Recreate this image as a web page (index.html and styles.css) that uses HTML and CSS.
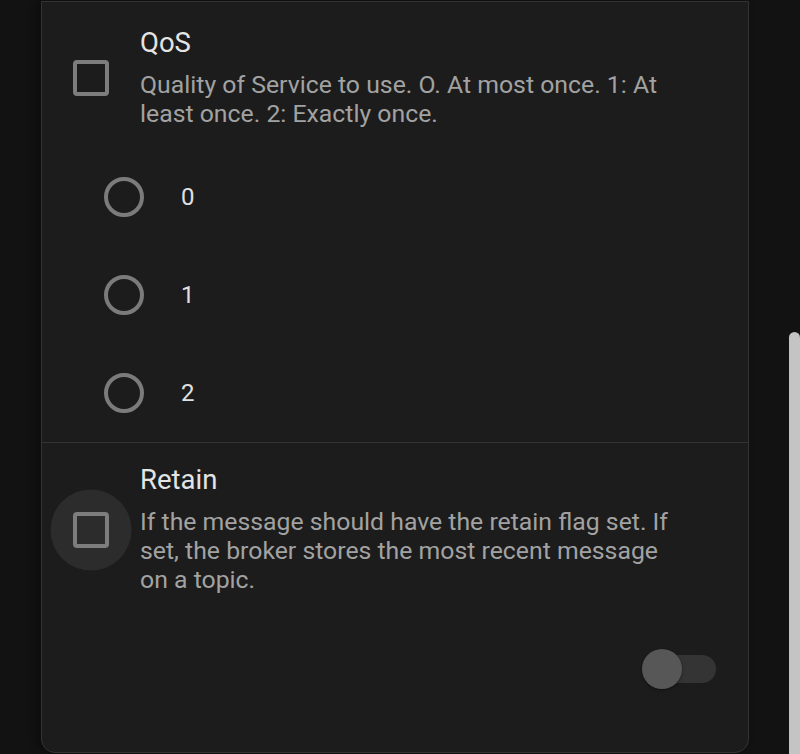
FILE: index.html
```html
<!DOCTYPE html>
<html>
<head>
<meta charset="utf-8">
<link rel="stylesheet" href="styles.css">
</head>
<body>
<div class="page">
  <div class="card">
    <section class="setting qos">
      <div class="control"><span class="checkbox"></span></div>
      <div class="text">
        <div class="title">QoS</div>
        <div class="desc">Quality of Service to use. O. At most once. 1: At least once. 2: Exactly once.</div>
      </div>
    </section>
    <ul class="radios">
      <li class="radio-row"><span class="radio"></span><span class="radio-label">0</span></li>
      <li class="radio-row"><span class="radio"></span><span class="radio-label">1</span></li>
      <li class="radio-row"><span class="radio"></span><span class="radio-label">2</span></li>
    </ul>
    <section class="setting retain">
      <div class="control"><span class="ripple"></span><span class="checkbox"></span></div>
      <div class="text">
        <div class="title">Retain</div>
        <div class="desc">If the message should have the retain flag set. If set, the broker stores the most recent message on a topic.</div>
      </div>
    </section>
    <div class="toggle-row">
      <span class="switch"><span class="track"></span><span class="thumb"></span></span>
    </div>
  </div>
  <div class="scrollbar"><div class="scroll-thumb"></div></div>
</div>
</body>
</html>
```

FILE: styles.css
```css
html, body {
  margin: 0;
  padding: 0;
  background: #121212;
  font-family: Roboto, "Noto Sans", sans-serif;
}
.page {
  display: flex;
  height: 754px;
  overflow: hidden;
  padding-left: 41px;
  box-sizing: border-box;
}
.card {
  width: 708px;
  height: 752px;
  margin-top: 1px;
  box-sizing: border-box;
  background: #1c1c1c;
  border: 1px solid #333333;
  border-radius: 0 0 14px 14px;
  box-shadow: -4px 0 8px rgba(0,0,0,0.35);
  display: flex;
  flex-direction: column;
}
.setting {
  display: grid;
  grid-template-columns: 98px 1fr;
  align-items: center;
}
.qos {
  padding-top: 26px;
}
.control {
  position: relative;
  display: flex;
  justify-content: center;
  align-items: center;
  height: 36px;
}
.checkbox {
  width: 36px;
  height: 36px;
  box-sizing: border-box;
  border: 4px solid #7d7d7d;
  border-radius: 4px;
  position: relative;
}
.ripple {
  position: absolute;
  width: 81px;
  height: 81px;
  border-radius: 50%;
  background: #2c2c2c;
  left: 50%;
  top: 50%;
  transform: translate(-50%, -50%);
}
.text {
  padding-right: 66px;
}
.title {
  font-size: 27.5px;
  line-height: 30px;
  color: #e4e4e4;
  margin-bottom: 12px;
}
.desc {
  font-size: 24.8px;
  line-height: 29px;
  color: #a2a2a2;
}
.radios {
  list-style: none;
  margin: 0;
  padding: 20px 0 0 0;
  border-bottom: 1px solid #333333;
}
.radio-row {
  height: 98px;
  display: flex;
  align-items: center;
  padding-left: 62px;
}
.radio {
  width: 40px;
  height: 40px;
  box-sizing: border-box;
  border: 4px solid #7b7b7b;
  border-radius: 50%;
}
.radio-label {
  margin-left: 37px;
  font-size: 24px;
  color: #e0e0e0;
}
.retain {
  padding-top: 22px;
}
.toggle-row {
  display: flex;
  justify-content: flex-end;
  padding-right: 32px;
  margin-top: 55px;
}
.switch {
  position: relative;
  width: 74px;
  height: 40px;
  display: flex;
  align-items: center;
}
.track {
  margin-left: 8px;
  width: 66px;
  height: 28px;
  border-radius: 14px;
  background: #343434;
}
.thumb {
  position: absolute;
  left: 0;
  top: 0;
  width: 40px;
  height: 40px;
  border-radius: 50%;
  background: #575757;
  box-shadow: 0 1px 3px rgba(0,0,0,0.4);
}
.scrollbar {
  margin-left: auto;
  width: 11px;
  padding-top: 332px;
}
.scroll-thumb {
  height: 430px;
  background: #c4c4c4;
  border-radius: 6px 6px 0 0;
}
```
